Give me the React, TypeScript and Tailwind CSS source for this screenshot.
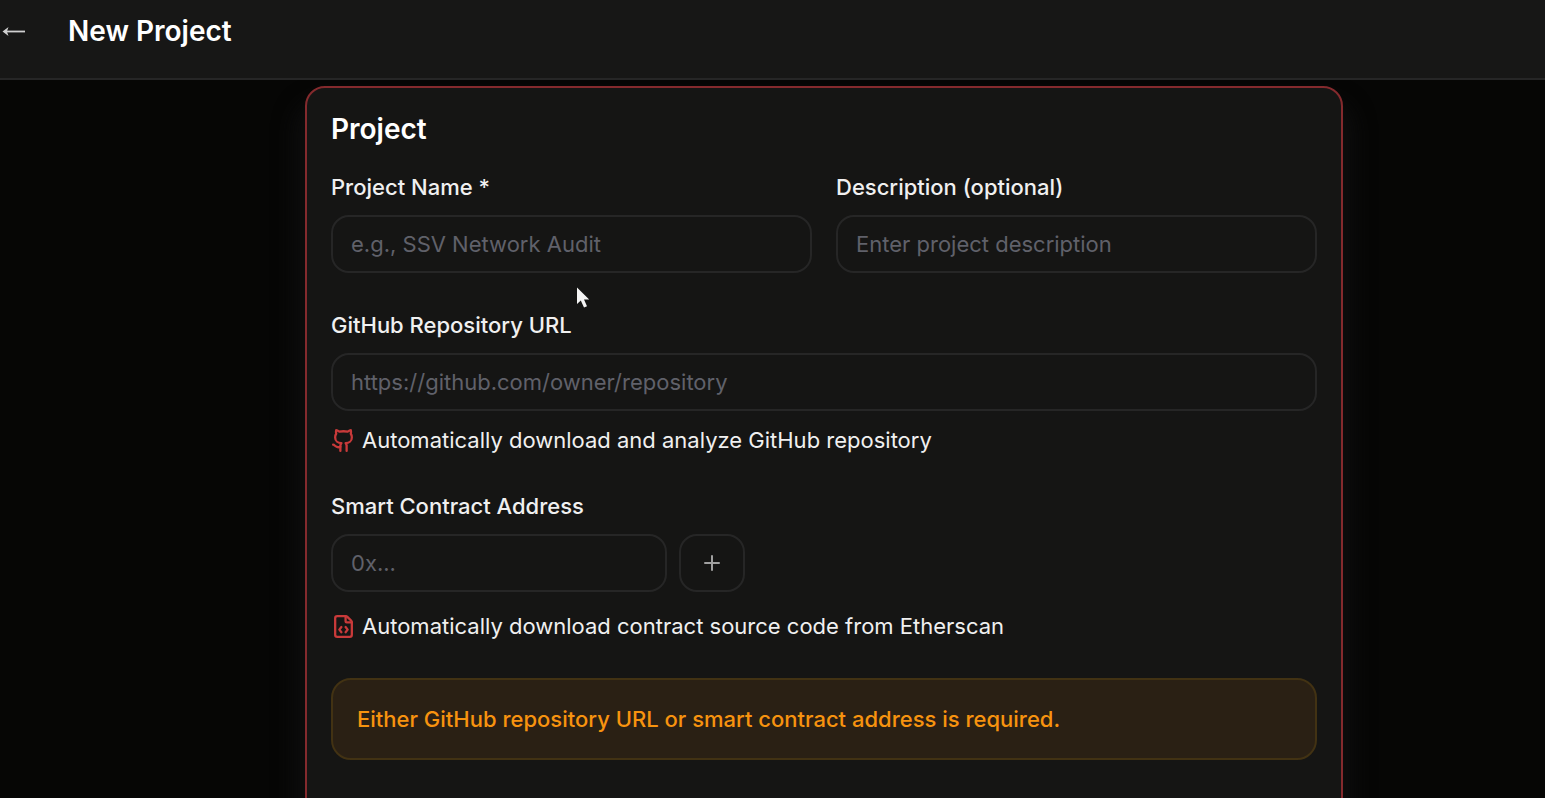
import { useState } from "react";
import type { InputHTMLAttributes, ReactNode } from "react";
import { FileCode, Github, Plus } from "lucide-react";

interface FieldProps extends InputHTMLAttributes<HTMLInputElement> {
  id: string;
  label: string;
  action?: ReactNode;
}

function Field({ id, label, action, className = "w-full", ...props }: FieldProps) {
  return (
    <div>
      <label htmlFor={id} className="mb-3.5 block text-[22px] leading-7 font-medium text-[#f0f0f0]">
        {label}
      </label>
      <div className="flex gap-3">
        <input
          id={id}
          type="text"
          className={`h-[58px] min-w-0 rounded-[18px] border-2 border-[#262626] bg-[#151514] px-[18px] text-[22px] text-[#f0f0f0] placeholder:text-[#60616a] focus:outline-none ${className}`}
          {...props}
        />
        {action}
      </div>
    </div>
  );
}

function Hint({ icon, children }: { icon: ReactNode; children: ReactNode }) {
  return (
    <p className="flex items-center gap-[6px] text-[22px] leading-7 text-[#f0f0f0]">
      <span className="text-[#c93a3a]">{icon}</span>
      {children}
    </p>
  );
}

export default function App() {
  const [name, setName] = useState("");
  const [description, setDescription] = useState("");
  const [repoUrl, setRepoUrl] = useState("");
  const [addresses, setAddresses] = useState([""]);

  const updateAddress = (index: number, value: string) => {
    setAddresses((prev) => prev.map((item, i) => (i === index ? value : item)));
  };

  return (
    <div className="relative flex h-screen flex-col overflow-hidden bg-[#060605] font-['Inter',sans-serif]">
      {/* Header */}
      <header className="relative z-10 flex shrink-0 items-center gap-10 border-b-2 border-[#262626] bg-[#171716] pt-3.5 pb-[30px]">
        <button type="button" aria-label="Back" className="pl-0.5 text-[#d0d0d0]">
          <svg width="26" height="16" viewBox="0 0 26 16" fill="none" stroke="currentColor" strokeWidth="1.8">
            <path d="M23 8.5H3" />
            <path d="M6.5 3.9 0.5 8.5 6.5 13.1 4.9 8.5Z" fill="currentColor" stroke="none" />
          </svg>
        </button>
        <h1 className="text-[28px] leading-[34px] font-semibold text-white">New Project</h1>
      </header>

      <main className="min-h-0 flex-1 overflow-hidden pt-1.5 pr-[202px] pl-[305px]">
        <form className="min-h-screen rounded-[20px] border-2 border-[#842a2d] bg-[#151514] p-6 shadow-[0_24px_20px_12px_#0d0d0d]">
          <h2 className="mb-[27px] text-[28px] leading-[34px] font-semibold text-white">Project</h2>

          <div className="space-y-[38px]">
            <div className="grid grid-cols-2 gap-6">
              <Field
                id="name"
                label="Project Name *"
                placeholder="e.g., SSV Network Audit"
                value={name}
                onChange={(e) => setName(e.target.value)}
              />
              <Field
                id="description"
                label="Description (optional)"
                placeholder="Enter project description"
                value={description}
                onChange={(e) => setDescription(e.target.value)}
              />
            </div>

            <div className="space-y-[15px]">
              <Field
                id="repo"
                label="GitHub Repository URL"
                placeholder="https://github.com/owner/repository"
                value={repoUrl}
                onChange={(e) => setRepoUrl(e.target.value)}
              />
              <Hint icon={<Github size={25} strokeWidth={2.2} />}>
                Automatically download and analyze GitHub repository
              </Hint>
            </div>

            <div className="space-y-5">
              {addresses.map((address, i) => (
                <Field
                  key={i}
                  id={`address-${i}`}
                  label="Smart Contract Address"
                  placeholder="0x..."
                  className="w-[336px]"
                  value={address}
                  onChange={(e) => updateAddress(i, e.target.value)}
                  action={
                    <button
                      type="button"
                      aria-label="Add address"
                      onClick={() => setAddresses((prev) => [...prev, ""])}
                      className="flex h-[58px] w-[66px] items-center justify-center rounded-[18px] border-2 border-[#262626] text-[#a0a0a0]"
                    >
                      <Plus size={24} strokeWidth={2} />
                    </button>
                  }
                />
              ))}
              <Hint icon={<FileCode size={25} strokeWidth={2.2} />}>
                Automatically download contract source code from Etherscan
              </Hint>
            </div>

            <div className="rounded-[20px] border-2 border-[#423213] bg-[#2a2014] px-6 py-[25px] text-[22px] leading-7 font-medium text-[#f7930f]">
              Either GitHub repository URL or smart contract address is required.
            </div>
          </div>
        </form>
      </main>

      {/* Pointer */}
      <svg
        className="pointer-events-none absolute top-[287px] left-[576px] z-20"
        width="15"
        height="22"
        viewBox="0 0 15 22"
        fill="#f4f4f4"
      >
        <path d="M1 0.5V17L4.8 13.6 8 20.5 11 19.2 8 12.6H13.2Z" />
      </svg>
    </div>
  );
}
